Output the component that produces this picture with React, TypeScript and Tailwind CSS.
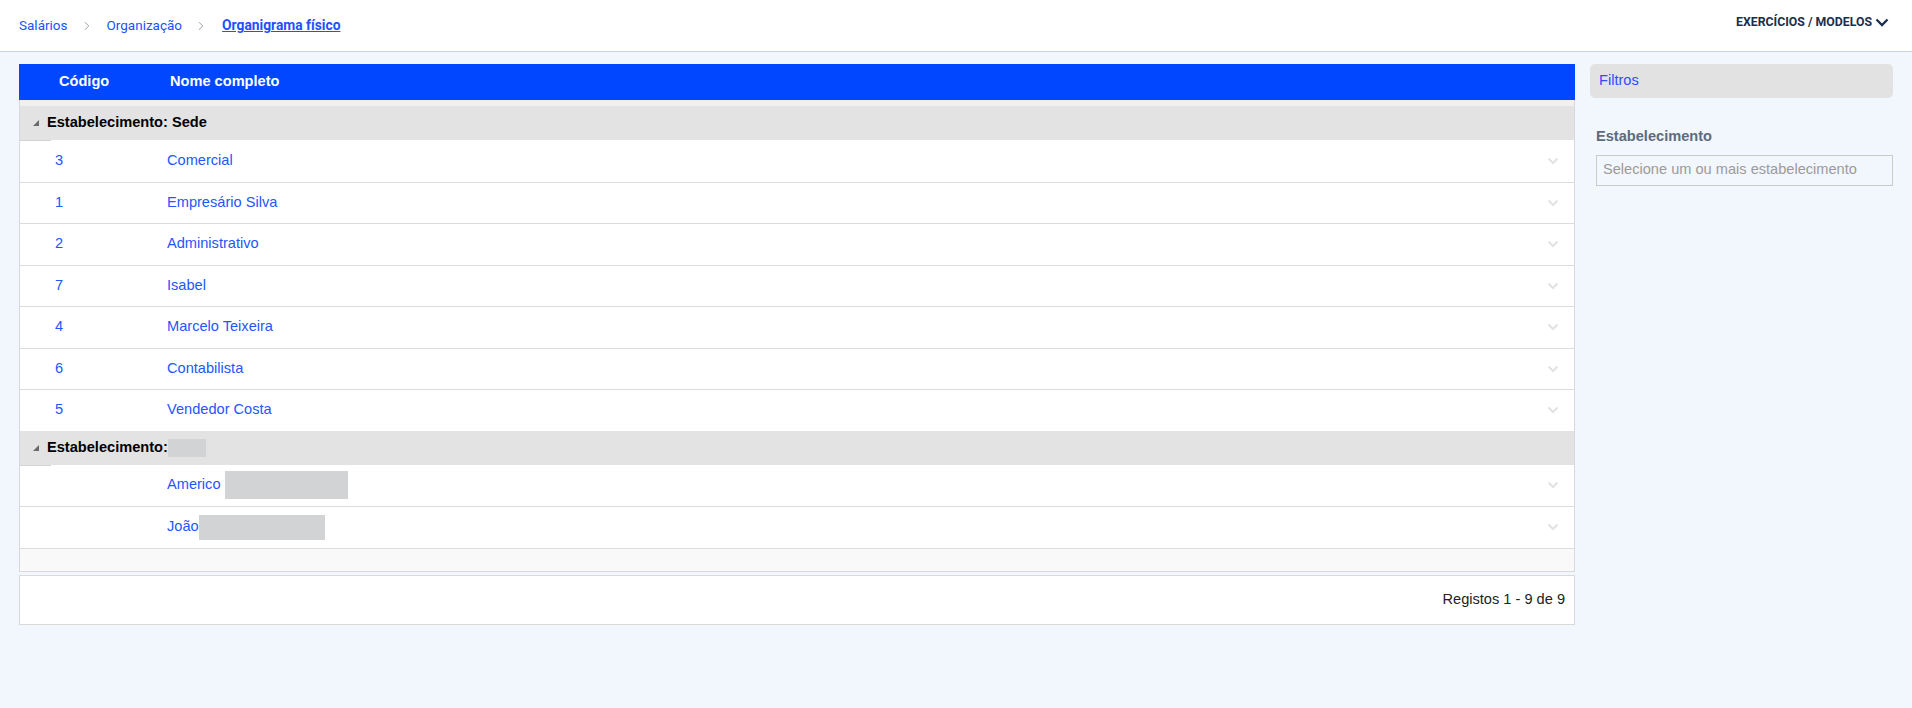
import { ChevronRight } from "lucide-react";

type Row = { code: string; name: string; redact?: string };

const groups: { label: string; redactLabel?: boolean; rows: Row[] }[] = [
  {
    label: "Estabelecimento: Sede",
    rows: [
      { code: "3", name: "Comercial" },
      { code: "1", name: "Empresário Silva" },
      { code: "2", name: "Administrativo" },
      { code: "7", name: "Isabel" },
      { code: "4", name: "Marcelo Teixeira" },
      { code: "6", name: "Contabilista" },
      { code: "5", name: "Vendedor Costa" },
    ],
  },
  {
    label: "Estabelecimento:",
    redactLabel: true,
    rows: [
      { code: "", name: "Americo", redact: "ml-[4px] w-[123px] h-[28px]" },
      { code: "", name: "João", redact: "w-[126px] h-[25px]" },
    ],
  },
];

const Caret = () => (
  <svg width="12" height="8" viewBox="0 0 12 8" className="text-[#e2e2e2]">
    <polyline points="1.5,1.5 6,6 10.5,1.5" fill="none" stroke="currentColor" strokeWidth="2" />
  </svg>
);

const App = () => {
  return (
    <div className="min-h-[708px] bg-[#f2f6fd] font-['Liberation_Sans',Arial,sans-serif]">
      {/* top bar */}
      <div className="h-[52px] bg-white border-b border-[#cdd4e0] flex items-center justify-between pl-[19px] pr-[23px] font-['Roboto',sans-serif]">
        <div className="flex items-center text-[13.5px] text-[#2250ff]">
          <span>Salários</span>
          <ChevronRight size={14} strokeWidth={1.5} className="ml-[12px] mr-[13px] text-[#8c919a]" />
          <span>Organização</span>
          <ChevronRight size={14} strokeWidth={1.5} className="ml-[12px] mr-[14px] text-[#8c919a]" />
          <span className="font-bold underline text-[13.8px]">Organigrama físico</span>
        </div>
        <div className="flex items-center gap-[3px] text-[12.3px] font-bold text-[#1b2e4d] pb-[6px]">
          <span>EXERCÍCIOS / MODELOS</span>
          <svg width="14" height="9" viewBox="0 0 14 9">
            <polyline points="1.5,1.5 7,7 12.5,1.5" fill="none" stroke="currentColor" strokeWidth="2.3" />
          </svg>
        </div>
      </div>

      <div className="flex gap-[15px] px-[19px] pt-3 text-[14.6px]">
        {/* grid */}
        <div className="flex-1">
          <div className="bg-white border-x border-b border-[#d9d9d9]">
            <div className="h-[36px] bg-[#0047ff] flex items-center text-white font-bold -mx-px">
              <div className="w-[32px]" />
              <div className="w-[112px] pl-2">Código</div>
              <div className="pl-[7px]">Nome completo</div>
            </div>
            <div className="h-[6px] bg-[#f0f0f0]" />
            {groups.map((g) => (
              <div key={g.label}>
                <div className="h-[34px] bg-[#e3e3e3] flex items-center font-bold text-black">
                  <div className="w-[27px] flex justify-center pl-[4px]">
                    <svg width="6" height="6" viewBox="0 0 6 6">
                      <polygon points="6,0 6,6 0,6" fill="#6b6b6b" />
                    </svg>
                  </div>
                  <span>{g.label}</span>
                  {g.redactLabel && <span className="w-[38px] h-[18px] bg-[#d2d3d5]" />}
                </div>
                {g.rows.map((r, i) => (
                  <div
                    key={r.name}
                    className={`h-[41.5px] flex items-center text-[#2456ff] ${
                      i > 0 ? "border-t border-[#dcdcdc]" : ""
                    }`}
                  >
                    <div className={`w-[31px] self-stretch ${i === 0 ? "border-t border-[#d2d2d2]" : ""}`} />
                    <div className="w-[112px] pl-[4px]">{r.code}</div>
                    <div className="flex-1 pl-[4px] flex items-center">
                      <span>{r.name}</span>
                      {r.redact && <span className={`bg-[#d2d3d5] ${r.redact}`} />}
                    </div>
                    <div className="w-[40px] flex justify-center pr-[3px]">
                      <Caret />
                    </div>
                  </div>
                ))}
              </div>
            ))}
            <div className="h-[23px] bg-[#f9f9f9] border-t border-[#dcdcdc]" />
          </div>
          <div className="mt-[3px] h-[50px] bg-white border border-[#d9d9d9] flex items-center justify-end pr-[9px] text-[#222]">
            Registos 1 - 9 de 9
          </div>
        </div>

        {/* filters */}
        <div className="w-[303px]">
          <div className="h-[34px] rounded-[5px] bg-[#e2e2e2] flex items-center pl-[9px] text-[#2f4cff]">
            Filtros
          </div>
          <div className="ml-[6px] mt-[28px] font-bold text-[#5d6b7e]">Estabelecimento</div>
          <div className="ml-[6px] mt-[7px] h-[31px] bg-[#f2f6fd] border border-[#cacaca] flex items-center pl-[6px] text-[#9b9b9b]">
            Selecione um ou mais estabelecimento
          </div>
        </div>
      </div>
    </div>
  );
};

export default App;
